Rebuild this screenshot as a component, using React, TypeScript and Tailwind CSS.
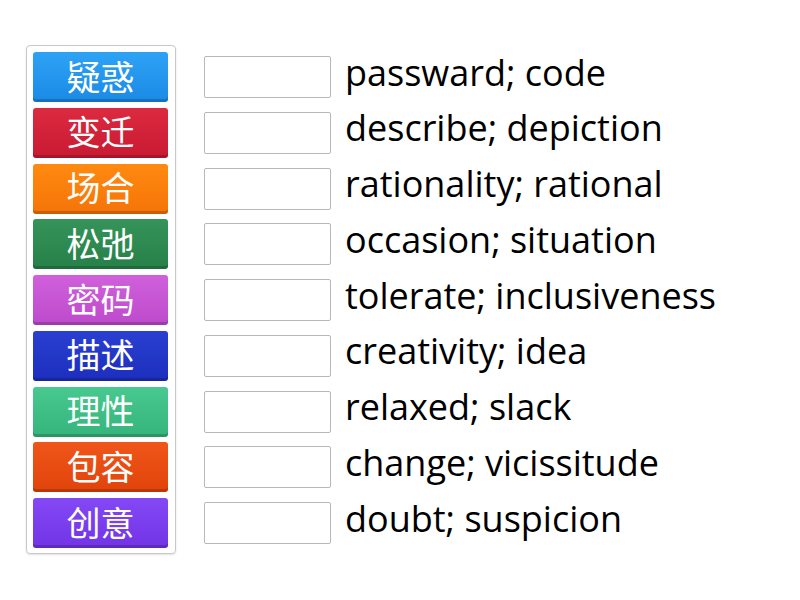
import React from "react";

const tiles: { t: string; c: string }[] = [
  { t: "疑惑", c: "bg-[linear-gradient(#2ea3f5,#1a8ae6)]" },
  { t: "变迁", c: "bg-[linear-gradient(#dc2a40,#c81a32)]" },
  { t: "场合", c: "bg-[linear-gradient(#ff8a10,#f57408)]" },
  { t: "松弛", c: "bg-[linear-gradient(#35945a,#268048)]" },
  { t: "密码", c: "bg-[linear-gradient(#d060dc,#bd4acb)]" },
  { t: "描述", c: "bg-[linear-gradient(#2a40d2,#1c2ebd)]" },
  { t: "理性", c: "bg-[linear-gradient(#48c98f,#35b47b)]" },
  { t: "包容", c: "bg-[linear-gradient(#f0551a,#e0440a)]" },
  { t: "创意", c: "bg-[linear-gradient(#8448f5,#7234e6)]" },
];

const words = [
  "passward; code",
  "describe; depiction",
  "rationality; rational",
  "occasion; situation",
  "tolerate; inclusiveness",
  "creativity; idea",
  "relaxed; slack",
  "change; vicissitude",
  "doubt; suspicion",
];

export default function App() {
  return (
    <div className="w-[800px] h-[600px] bg-white flex items-start pt-[45px] pl-[26px]" style={{ fontFamily: "'Open Sans', 'Noto Sans CJK SC', sans-serif" }}>
      <div className="w-[150px] h-[509px] border border-[#c8c8c8] rounded-[4px] shadow-[0_1px_2px_rgba(0,0,0,0.12)] pt-[6px] pl-[6px] flex flex-col gap-[5.75px]">
        {tiles.map((x) => (
          <div
            key={x.t}
            className={`w-[135px] h-[50px] rounded-[3px] ${x.c} shadow-[inset_0_-3px_0_rgba(0,0,0,0.18)] flex items-center justify-center text-white text-[34px] leading-none`}
            style={{ fontFamily: "'Noto Sans CJK SC', sans-serif" }}
          >
            <span className="-mt-[3px]">{x.t}</span>
          </div>
        ))}
      </div>
      <div className="ml-[28px] pt-[11px] flex flex-col gap-[13.75px]">
        {words.map((w) => (
          <div key={w} className="flex items-center h-[42px]">
            <div className="w-[127px] h-[42px] border border-[#b8b8b8] rounded-[2px] bg-white" />
            <div className="ml-[14px] text-[36px] leading-none text-black -mt-[9px] [font-variant-ligatures:none]">{w}</div>
          </div>
        ))}
      </div>
    </div>
  );
}
